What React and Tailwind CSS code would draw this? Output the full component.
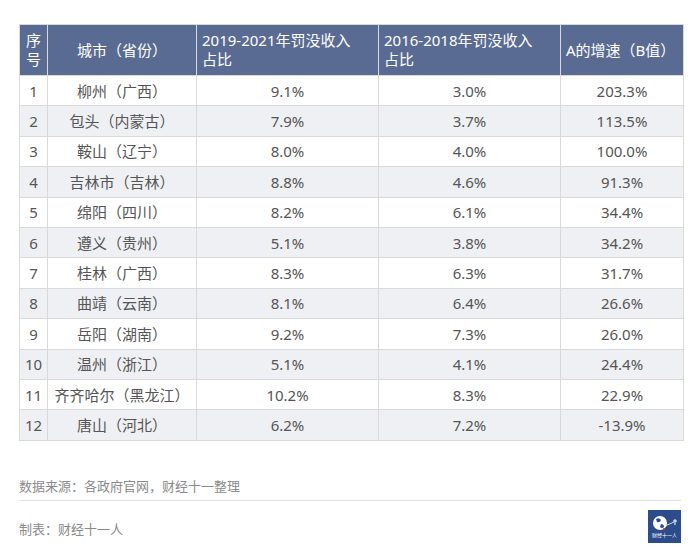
import React from "react";

const rows = [
  ["1", "柳州（广西）", "9.1%", "3.0%", "203.3%"],
  ["2", "包头（内蒙古）", "7.9%", "3.7%", "113.5%"],
  ["3", "鞍山（辽宁）", "8.0%", "4.0%", "100.0%"],
  ["4", "吉林市（吉林）", "8.8%", "4.6%", "91.3%"],
  ["5", "绵阳（四川）", "8.2%", "6.1%", "34.4%"],
  ["6", "遵义（贵州）", "5.1%", "3.8%", "34.2%"],
  ["7", "桂林（广西）", "8.3%", "6.3%", "31.7%"],
  ["8", "曲靖（云南）", "8.1%", "6.4%", "26.6%"],
  ["9", "岳阳（湖南）", "9.2%", "7.3%", "26.0%"],
  ["10", "温州（浙江）", "5.1%", "4.1%", "24.4%"],
  ["11", "齐齐哈尔（黑龙江）", "10.2%", "8.3%", "22.9%"],
  ["12", "唐山（河北）", "6.2%", "7.2%", "-13.9%"],
];

function Logo() {
  return (
    <svg width="33" height="33" viewBox="0 0 33 33">
      <rect width="33" height="33" fill="#2d4c8c" />
      <circle cx="12" cy="13" r="7" fill="#fff" />
      <path d="M8 9 q3 -2 5 1 q-1 3 -4 2 z M13 14 q3 0 3 3 q-2 2 -4 0 z" fill="#2d4c8c" />
      <path d="M17 16 L26 12" stroke="#fff" strokeWidth="0.8" />
      <path d="M27 9 v6 M25 11 h4" stroke="#fff" strokeWidth="1" />
      <circle cx="16" cy="19" r="1" fill="#d33" />
      <text x="16.5" y="27" fontSize="5" fill="#fff" textAnchor="middle" fontFamily="Noto Sans CJK SC">财经十一人</text>
    </svg>
  );
}

export default function App() {
  return (
    <div
      className="w-[700px] h-[560px] bg-white text-[#555]"
      style={{ fontFamily: '"Noto Sans", "Noto Sans CJK SC", sans-serif' }}
    >
      <div className="pt-[24px] px-[19px]">
        <table className="w-[664px] border-collapse text-[15px] table-fixed">
          <colgroup>
            <col className="w-[28px]" />
            <col className="w-[149px]" />
            <col className="w-[182px]" />
            <col className="w-[182px]" />
            <col className="w-[123px]" />
          </colgroup>
          <thead>
            <tr className="bg-[#5a6b93] text-white leading-[19px]">
              <th className="h-[51px] border border-[#d9d9d9] font-normal px-[2px] text-center">序<br />号</th>
              <th className="border border-[#d9d9d9] font-normal text-center">城市（省份）</th>
              <th className="border border-[#d9d9d9] font-normal text-left pl-[5px] pr-[2px]">2019-2021年罚没收入<br />占比</th>
              <th className="border border-[#d9d9d9] font-normal text-left pl-[5px] pr-[2px]">2016-2018年罚没收入<br />占比</th>
              <th className="border border-[#d9d9d9] font-normal text-left pl-[5px] pr-[2px]">A的增速（B值）</th>
            </tr>
          </thead>
          <tbody>
            {rows.map((r, i) => (
              <tr key={r[0]} className={i % 2 === 1 ? "bg-[#eff0f4]" : "bg-white"}>
                {r.map((c, j) => (
                  <td
                    key={j}
                    className="h-[30.4px] border border-[#d9d9d9] text-center px-0 leading-[20px]"
                  >
                    {c}
                  </td>
                ))}
              </tr>
            ))}
          </tbody>
        </table>
      </div>

      <div className="mt-[35px] px-[19px]">
        <div className="w-[662px] border-b border-[#e3e3e3] pb-[4px] text-[13px] text-[#8a8a8a] leading-[20px]">
          数据来源：各政府官网，财经十一整理
        </div>
        <div className="w-[662px] flex justify-between items-start">
          <div className="mt-[18px] text-[13px] text-[#8a8a8a] leading-[20px]">制表：财经十一人</div>
          <div className="mt-[9px]">
            <Logo />
          </div>
        </div>
      </div>
    </div>
  );
}
